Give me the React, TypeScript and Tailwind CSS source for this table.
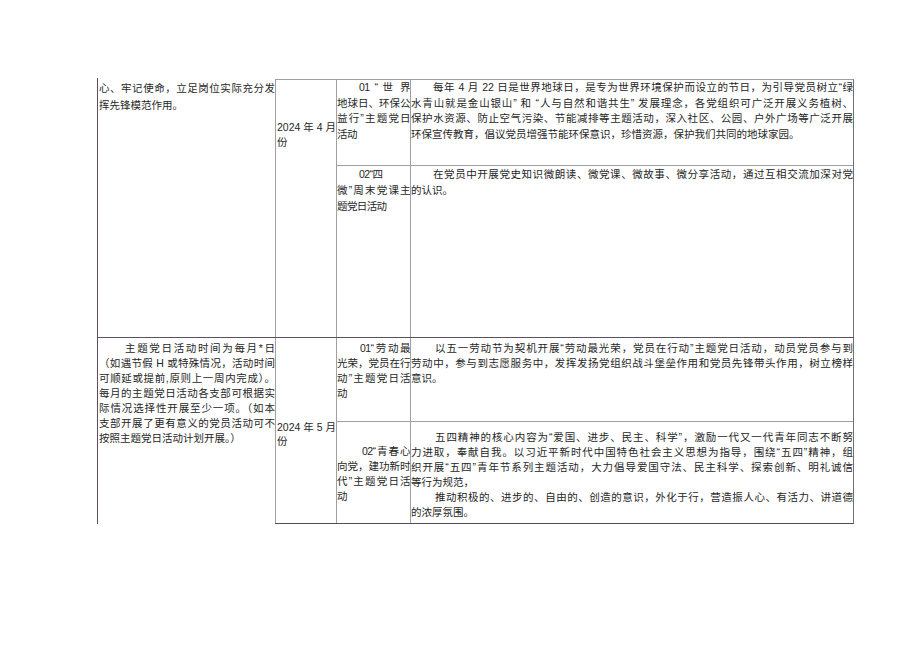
import React from "react";

type L = { t: string; j?: boolean; ind?: string };

function Lines({ lines, lh = "leading-[15px]" }: { lines: L[]; lh?: string }) {
  return (
    <>
      {lines.map((l, i) => (
        <div
          key={i}
          className={
            (l.j ? "text-justify [text-align-last:justify] " : "text-left ") +
            (l.ind ?? "") +
            " " +
            lh
          }
        >
          {l.t}
        </div>
      ))}
    </>
  );
}

const IND = "pl-[22px]";

export default function App() {
  return (
    <div
      lang="zh-CN"
      className="w-[920px] h-[651px] bg-white overflow-hidden text-[10.5px] text-[#262626]"
      style={{ fontFamily: '"Liberation Sans", "Noto Sans CJK SC", sans-serif' }}
    >
      <div className="ml-[97px] pt-[78px] w-[757px]">
        {/* April row */}
        <div className="flex h-[260px] border-b border-[#5a5060]">
          <div className="w-[178px] shrink-0 border-l border-[#5e4c63] pl-px pt-[2px]">
            <Lines
              lh="leading-[17px]"
              lines={[
                { t: "心、牢记使命，立足岗位实际充分发", j: true },
                { t: "挥先锋模范作用。" },
              ]}
            />
          </div>
          <div className="flex flex-1 mt-px border-t border-r border-t-[#a0a0a0] border-r-[#707070]">
            <div className="w-[61px] shrink-0 border-l border-[#a0a0a0] pl-px pt-[40px]">
              <Lines lines={[{ t: "2024 年 4 月", j: true }, { t: "份" }]} />
            </div>
            <div className="flex flex-1 flex-col">
              <div className="flex h-[86px] shrink-0 border-b border-[#a0a0a0]">
                <div className="w-[74px] shrink-0 border-l border-[#a0a0a0] tracking-[-0.6px]">
                  <Lines
                    lh="leading-[15.5px]"
                    lines={[
                      { t: "01 “ 世 界", j: true, ind: IND },
                      { t: "地球日、环保公", j: true },
                      { t: "益行”主题党日", j: true },
                      { t: "活动" },
                    ]}
                  />
                </div>
                <div className="flex-1 border-l border-[#a0a0a0]">
                  <Lines
                    lh="leading-[15.5px]"
                    lines={[
                      {
                        t: "每年 4 月 22 日是世界地球日，是专为世界环境保护而设立的节日，为引导党员树立“绿",
                        j: true,
                        ind: IND,
                      },
                      {
                        t: "水青山就是金山银山” 和 “人与自然和谐共生” 发展理念，各党组织可广泛开展义务植树、",
                        j: true,
                      },
                      {
                        t: "保护水资源、防止空气污染、节能减排等主题活动，深入社区、公园、户外广场等广泛开展",
                        j: true,
                      },
                      { t: "环保宣传教育，倡议党员增强节能环保意识，珍惜资源，保护我们共同的地球家园。" },
                    ]}
                  />
                </div>
              </div>
              <div className="flex flex-1">
                <div className="w-[74px] shrink-0 border-l border-[#a0a0a0] tracking-[-0.6px]">
                  <Lines
                    lh="leading-[16px]"
                    lines={[
                      { t: "02“四", ind: IND },
                      { t: "微”周末党课主", j: true },
                      { t: "题党日活动" },
                    ]}
                  />
                </div>
                <div className="flex-1 border-l border-[#a0a0a0]">
                  <Lines
                    lh="leading-[16px]"
                    lines={[
                      {
                        t: "在党员中开展党史知识微朗读、微党课、微故事、微分享活动，通过互相交流加深对党",
                        j: true,
                        ind: IND,
                      },
                      { t: "的认识。" },
                    ]}
                  />
                </div>
              </div>
            </div>
          </div>
        </div>

        {/* May row */}
        <div className="flex h-[186px]">
          <div className="w-[178px] shrink-0 border-l border-[#5e4c63] pl-px pt-[3px]">
            <Lines
              lines={[
                { t: "主题党日活动时间为每月*日", j: true, ind: "pl-[26px]" },
                { t: "（如遇节假 H 或特殊情况，活动时间", j: true },
                { t: "可顺延或提前,原则上一周内完成）。", j: true },
                { t: "每月的主题党日活动各支部可根据实", j: true },
                { t: "际情况选择性开展至少一项。（如本", j: true },
                { t: "支部开展了更有意义的党员活动可不", j: true },
                { t: "按照主题党日活动计划开展。）" },
              ]}
            />
          </div>
          <div className="flex flex-1 border-b border-r border-b-[#5a4860] border-r-[#707070]">
            <div className="w-[61px] shrink-0 border-l border-[#a0a0a0] pl-px pt-[82px]">
              <Lines lh="leading-[14px]" lines={[{ t: "2024 年 5 月", j: true }, { t: "份" }]} />
            </div>
            <div className="flex flex-1 flex-col">
              <div className="flex h-[84px] shrink-0 border-b border-[#a0a0a0]">
                <div className="w-[74px] shrink-0 border-l border-[#a0a0a0] pt-[3px] tracking-[-0.6px]">
                  <Lines
                    lines={[
                      { t: "01“劳动最", j: true, ind: "pl-[23px]" },
                      { t: "光荣，党员在行", j: true },
                      { t: "动”主题党日活", j: true },
                      { t: "动" },
                    ]}
                  />
                </div>
                <div className="flex-1 border-l border-[#a0a0a0] pt-[3px]">
                  <Lines
                    lines={[
                      {
                        t: "以五一劳动节为契机开展“劳动最光荣，党员在行动”主题党日活动，动员党员参与到",
                        j: true,
                        ind: "pl-[24px]",
                      },
                      {
                        t: "劳动中，参与到志愿服务中，发挥发扬党组织战斗堡垒作用和党员先锋带头作用，树立榜样",
                        j: true,
                      },
                      { t: "意识。" },
                    ]}
                  />
                </div>
              </div>
              <div className="flex flex-1">
                <div className="w-[74px] shrink-0 border-l border-[#a0a0a0] pt-[22px] tracking-[-0.6px]">
                  <Lines
                    lines={[
                      { t: "02“青春心", j: true, ind: "pl-[25px]" },
                      { t: "向党，建功新时", j: true },
                      { t: "代”主题党日活", j: true },
                      { t: "动" },
                    ]}
                  />
                </div>
                <div className="flex-1 border-l border-[#a0a0a0] pt-[8px]">
                  <Lines
                    lines={[
                      {
                        t: "五四精神的核心内容为“爱国、进步、民主、科学”，激励一代又一代青年同志不断努",
                        j: true,
                        ind: "pl-[24px]",
                      },
                      {
                        t: "力进取，奉献自我。以习近平新时代中国特色社会主义思想为指导，围绕“五四”精神，组",
                        j: true,
                      },
                      {
                        t: "织开展“五四”青年节系列主题活动，大力倡导爱国守法、民主科学、探索创新、明礼诚信",
                        j: true,
                      },
                      { t: "等行为规范，" },
                      {
                        t: "推动积极的、进步的、自由的、创造的意识，外化于行，营造振人心、有活力、讲道德",
                        j: true,
                        ind: "pl-[24px]",
                      },
                      { t: "的浓厚氛围。" },
                    ]}
                  />
                </div>
              </div>
            </div>
          </div>
        </div>
      </div>
    </div>
  );
}
